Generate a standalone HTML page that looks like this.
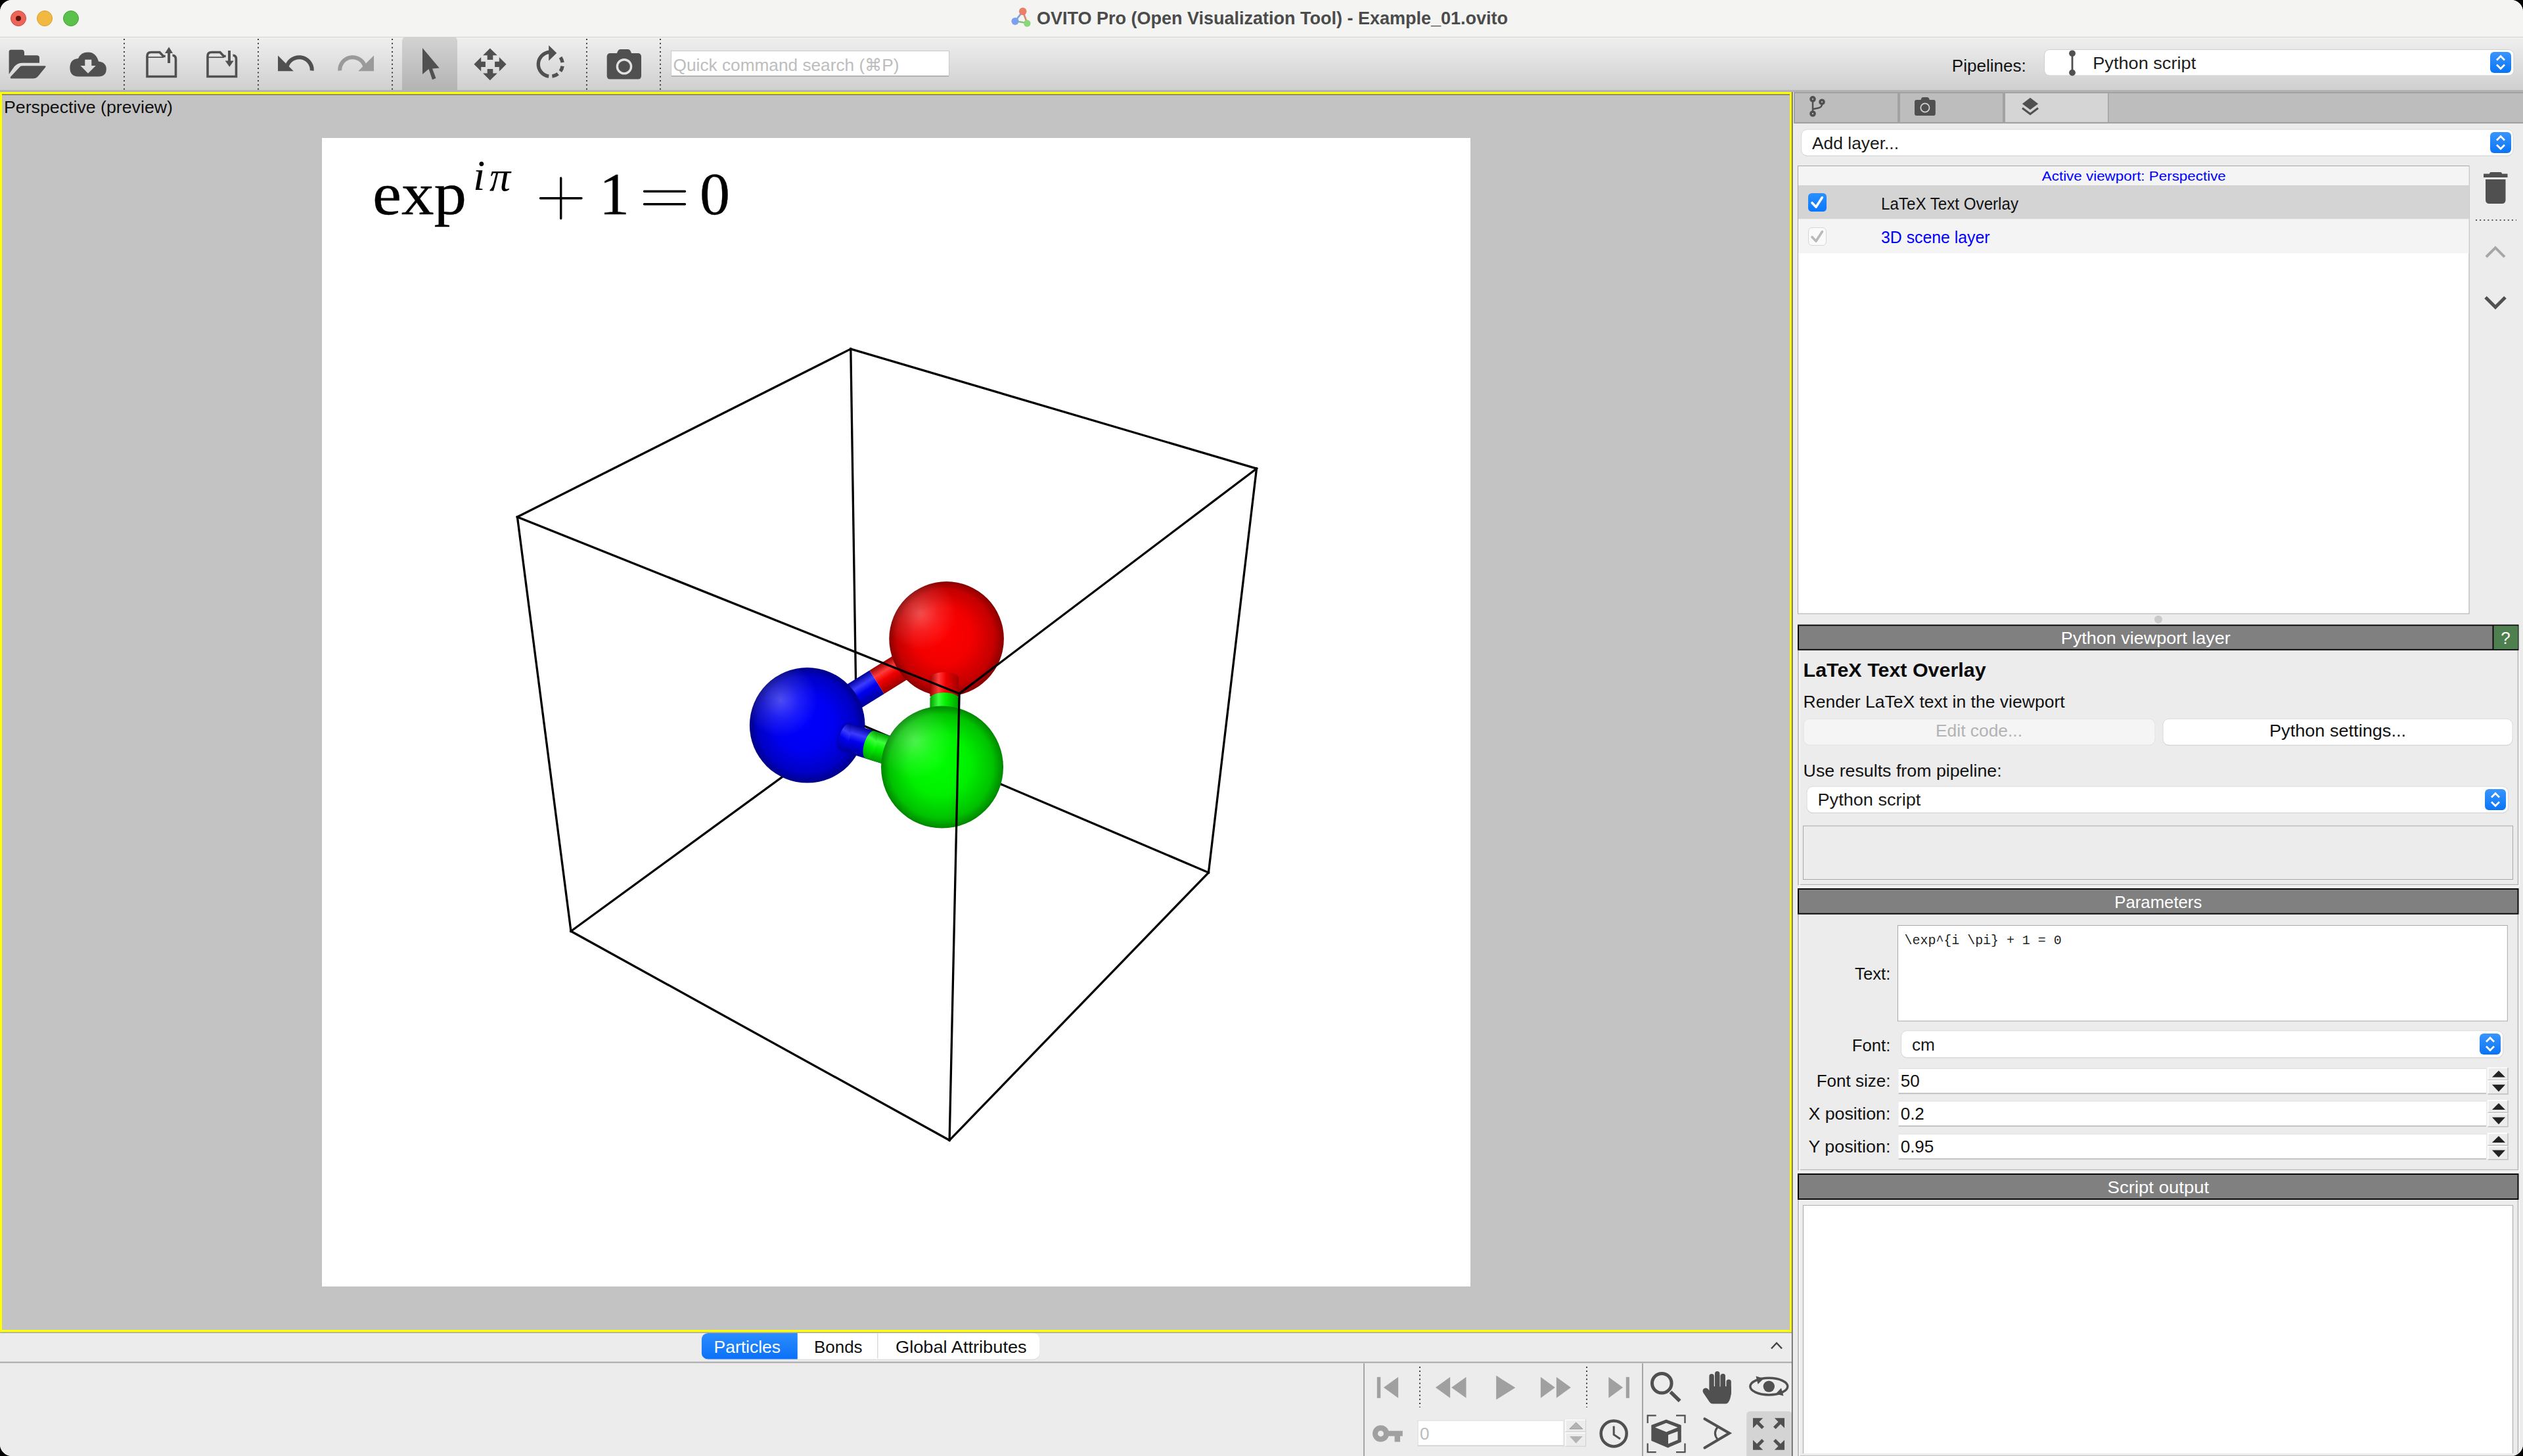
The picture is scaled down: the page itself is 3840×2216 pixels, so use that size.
<!DOCTYPE html>
<html><head><meta charset="utf-8">
<style>
*{margin:0;padding:0}
html,body{width:3840px;height:2216px;overflow:hidden;background:#000}
#win{position:absolute;left:0;top:0;width:3840px;height:2216px;border-radius:18px;overflow:hidden;background:#ececec}
svg{position:absolute;left:0;top:0;display:block}
</style></head><body>
<div id="win">
<svg width="3840" height="2216" viewBox="0 0 3840 2216">
<rect x="0" y="0" width="3840" height="57" fill="#f4f4f2" />
<rect x="0" y="56" width="3840" height="1" fill="#d2d2d2" />
<circle cx="28" cy="28" r="11.5" fill="#ec6559" stroke="#d24b3f" stroke-width="1"/>
<circle cx="68" cy="28" r="11.5" fill="#f2b940" stroke="#d99b2b" stroke-width="1"/>
<circle cx="108" cy="28" r="11.5" fill="#5ac24a" stroke="#40a332" stroke-width="1"/>
<circle cx="28" cy="28" r="4" fill="#60130b"/>
<line x1="1556.7" y1="17.3" x2="1545" y2="32.3" stroke="#7f9fd8" stroke-width="2.6"/>
<line x1="1556.7" y1="17.3" x2="1563.3" y2="35" stroke="#d88a70" stroke-width="2.6"/>
<line x1="1545" y1="32.3" x2="1563.3" y2="35" stroke="#86c07a" stroke-width="2.6"/>
<circle cx="1556.7" cy="17.3" r="5.8" fill="#e8806a"/>
<circle cx="1545" cy="32.3" r="5.6" fill="#7d9ff0"/>
<circle cx="1563.3" cy="35.5" r="5.2" fill="#8ad67a"/>
<text x="1578" y="37" font-family="Liberation Sans" font-size="27" fill="#4b4b4b" font-weight="bold" text-anchor="start" textLength="717" lengthAdjust="spacingAndGlyphs" >OVITO Pro (Open Visualization Tool) - Example_01.ovito</text>
<defs><linearGradient id="tbg" x1="0" y1="0" x2="0" y2="1"><stop offset="0" stop-color="#efefef"/><stop offset="1" stop-color="#cfcfcf"/></linearGradient><linearGradient id="selg" x1="0" y1="0" x2="0" y2="1"><stop offset="0" stop-color="#d3d3d3"/><stop offset="1" stop-color="#b3b3b3"/></linearGradient></defs>
<rect x="0" y="57" width="3840" height="81" fill="url(#tbg)" />
<rect x="0" y="137" width="3840" height="3" fill="#b2b2b2" />
<line x1="189" y1="59" x2="189" y2="138" stroke="#3c3c3c" stroke-width="2" stroke-dasharray="2 4.3"/>
<line x1="393" y1="59" x2="393" y2="138" stroke="#3c3c3c" stroke-width="2" stroke-dasharray="2 4.3"/>
<line x1="597" y1="59" x2="597" y2="138" stroke="#3c3c3c" stroke-width="2" stroke-dasharray="2 4.3"/>
<line x1="893" y1="59" x2="893" y2="138" stroke="#3c3c3c" stroke-width="2" stroke-dasharray="2 4.3"/>
<line x1="1005" y1="59" x2="1005" y2="138" stroke="#3c3c3c" stroke-width="2" stroke-dasharray="2 4.3"/>
<path d="M612 138 V63 Q612 56 619 56 H689 Q696 56 696 63 V138 Z" fill="url(#selg)"/>
<path d="M13.6 113 V79 Q13.6 75.7 17 75.7 H33 Q37 75.7 37 80 V84.3 H56 Q60 84.3 60 88 V95.7 H34 Q27 95.7 22 101 Z" fill="#505050"/>
<path d="M16 117 L29.5 102.5 Q31 100.3 34 100.3 H68.5 Q70.5 100.5 69 102.5 L58 116 Q55 119.6 50 119.6 H18 Q15 119.6 16 117 Z" fill="#505050"/>
<path d="M119 116.4 Q106.4 116.4 106.4 103 Q106.4 90 119 89 Q123 79.6 134 79.6 Q146 79.6 150 93.5 Q161.8 95 161.8 105 Q161.8 116.4 150 116.4 Z M129.3 90.7 V100 H122.5 L134 111.8 L145.7 100 H139.3 V90.7 Z" fill="#505050" fill-rule="evenodd"/>
<path d="M262.5 84.3 Q267.5 84.3 267.5 90 V116.5 H224 V85.5 Q224 79.5 230 79.5 H243 L248.5 85.5 H251.7" fill="none" stroke="#505050" stroke-width="3.6"/><path d="M224 87.2 H249" stroke="#505050" stroke-width="1.8"/>
<rect x="255.1" y="80" width="4" height="16" fill="#505050"/><path d="M251 81 L263.1 81 L257.1 71.4 Z" fill="#505050"/>
<path d="M354.5 84.3 Q359.5 84.3 359.5 90 V116.5 H316 V85.5 Q316 79.5 322 79.5 H335 L340.5 85.5 H343.7" fill="none" stroke="#505050" stroke-width="3.6"/><path d="M316 87.2 H341" stroke="#505050" stroke-width="1.8"/>
<rect x="347" y="77" width="4" height="16" fill="#505050"/><path d="M342.7 92.5 L355.7 92.5 L349.3 101.8 Z" fill="#505050"/>
<path d="M423 84.5 V108.3 H446.8 Z" fill="#505050"/>
<path d="M436 104 A19.5 19.5 0 0 1 474.8 107.5" fill="none" stroke="#505050" stroke-width="6"/>
<path d="M569 84.5 V108.3 H545.2 Z" fill="#9a9a9a"/>
<path d="M556 104 A19.5 19.5 0 0 0 517.2 107.5" fill="none" stroke="#9a9a9a" stroke-width="6"/>
<path d="M643 73 V113 L652.5 105 L658 121.3 L663.5 119 L658 104.5 L668.7 103.5 Z" fill="#505050"/>
<g fill="#505050"><path d="M745.8 73.4 L756.9 84.2 H750.3 V90.9 H741.7 V84.2 H735 Z"/><path d="M745.8 122.2 L756.9 111.5 H750.3 V105.1 H741.7 V111.5 H735 Z"/><path d="M721.4 97.8 L732.2 87 V93.7 H738.9 V102 H732.2 V108.6 Z"/><path d="M770.6 97.8 L759.8 87 V93.7 H753.1 V102 H759.8 V108.6 Z"/></g>
<path d="M837.80 79.30 A18.5 18.5 0 0 0 835.23 116.12 M853.01 87.27 A18.5 18.5 0 0 1 856.10 95.10 M856.09 100.60 A18.5 18.5 0 0 1 852.86 108.54 M849.19 112.38 A18.5 18.5 0 0 1 840.37 116.12" fill="none" stroke="#505050" stroke-width="5.4"/>
<path d="M835.2 69 L847.3 80.7 L835.2 92.4 Z" fill="#505050"/>
<rect x="923.7" y="81" width="52.3" height="39.6" rx="4.752" fill="#505050"/>
<path d="M938 83 L940.2 78.1 Q941.5 75.1 944.5 75.1 H955.5 Q958.5 75.1 959.8 78.1 L962 83 Z" fill="#505050"/>
<circle cx="950" cy="101.3" r="10.6" fill="none" stroke="#e2e2e2" stroke-width="3.4"/>
<rect x="1021.5" y="77.5" width="423" height="38.5" fill="#ffffff" stroke="#c9c9c9" stroke-width="1"/>
<rect x="1022" y="115" width="422" height="1.5" fill="#a8a8a8" />
<text x="1024.6" y="108" font-family="Liberation Sans" font-size="26" fill="#bdbdbd" font-weight="normal" text-anchor="start" textLength="344" lengthAdjust="spacingAndGlyphs" >Quick command search (⌘P)</text>
<text x="2970.8" y="109" font-family="Liberation Sans" font-size="26" fill="#111" font-weight="normal" text-anchor="start" textLength="113" lengthAdjust="spacingAndGlyphs" >Pipelines:</text>
<rect x="3111.5" y="75.5" width="714.5" height="39.5" rx="8" fill="#fff" stroke="#cfcfcf" stroke-width="1"/>
<circle cx="3154" cy="81.3" r="4.9" fill="#505050"/><circle cx="3154" cy="110.6" r="4.9" fill="#505050"/><rect x="3152.6" y="81" width="2.8" height="30" fill="#505050"/>
<text x="3185.2" y="104.8" font-family="Liberation Sans" font-size="26" fill="#1e1e1e" font-weight="normal" text-anchor="start" textLength="157" lengthAdjust="spacingAndGlyphs" >Python script</text>
<defs><linearGradient id="stg379079" x1="0" y1="0" x2="0" y2="1"><stop offset="0" stop-color="#3a95ff"/><stop offset="1" stop-color="#0a74f5"/></linearGradient></defs>
<rect x="3790" y="79" width="32" height="32" rx="6" fill="url(#stg379079)"/>
<path d="M3800.0 91.5 L3806.0 85.5 L3812.0 91.5 M3800.0 98.5 L3806.0 104.5 L3812.0 98.5" fill="none" stroke="#fff" stroke-width="2.8"/>
<rect x="0" y="140" width="2728" height="1888" fill="#c3c3c3" />
<rect x="0" y="140" width="2728" height="3.5" fill="#ffff00" />
<rect x="0" y="2024" width="2728" height="3.5" fill="#ffff00" />
<rect x="0" y="140" width="3" height="1888" fill="#ffff00" />
<rect x="2724" y="140" width="3.5" height="1888" fill="#ffff00" />
<rect x="3" y="143.5" width="2721" height="1" fill="#4a4a5a" />
<rect x="0" y="2027.5" width="2728" height="1.5" fill="#a8a8a8" />
<text x="6" y="172" font-family="Liberation Sans" font-size="26" fill="#111" font-weight="normal" text-anchor="start" textLength="257" lengthAdjust="spacingAndGlyphs" >Perspective (preview)</text>
<rect x="490" y="210" width="1748" height="1748" fill="#ffffff" />
<line x1="1294.8" y1="531.1" x2="1303.5" y2="1100" stroke="#000" stroke-width="3.3" stroke-linecap="square"/>
<line x1="869" y1="1417.3" x2="1303.5" y2="1100" stroke="#000" stroke-width="3.3" stroke-linecap="square"/>
<line x1="1839.4" y1="1328" x2="1303.5" y2="1100" stroke="#000" stroke-width="3.3" stroke-linecap="square"/>
<line x1="787.4" y1="786.8" x2="1294.8" y2="531.1" stroke="#000" stroke-width="3.3" stroke-linecap="square"/>
<line x1="1294.8" y1="531.1" x2="1912.5" y2="713.2" stroke="#000" stroke-width="3.3" stroke-linecap="square"/>
<line x1="787.4" y1="786.8" x2="869" y2="1417.3" stroke="#000" stroke-width="3.3" stroke-linecap="square"/>
<line x1="1912.5" y1="713.2" x2="1839.4" y2="1328" stroke="#000" stroke-width="3.3" stroke-linecap="square"/>
<line x1="869" y1="1417.3" x2="1445.1" y2="1735.4" stroke="#000" stroke-width="3.3" stroke-linecap="square"/>
<line x1="1839.4" y1="1328" x2="1445.1" y2="1735.4" stroke="#000" stroke-width="3.3" stroke-linecap="square"/>
<defs><radialGradient id="hl" cx="0.27" cy="0.28" r="0.32"><stop offset="0" stop-color="#fff" stop-opacity="0.3"/><stop offset="0.5" stop-color="#fff" stop-opacity="0.12"/><stop offset="1" stop-color="#fff" stop-opacity="0"/></radialGradient></defs>
<defs><radialGradient id="gR" cx="0.5" cy="0.5" r="0.5" fx="0.45" fy="0.45"><stop offset="0" stop-color="#ff0000"/><stop offset="0.5" stop-color="#f20000"/><stop offset="0.85" stop-color="#c40000"/><stop offset="1" stop-color="#880000"/></radialGradient></defs>
<defs><radialGradient id="gB" cx="0.5" cy="0.5" r="0.5" fx="0.45" fy="0.45"><stop offset="0" stop-color="#0000ff"/><stop offset="0.5" stop-color="#0000f2"/><stop offset="0.85" stop-color="#0000c4"/><stop offset="1" stop-color="#000088"/></radialGradient></defs>
<defs><radialGradient id="gG" cx="0.5" cy="0.5" r="0.5" fx="0.45" fy="0.45"><stop offset="0" stop-color="#00ff00"/><stop offset="0.5" stop-color="#00f000"/><stop offset="0.85" stop-color="#00c200"/><stop offset="1" stop-color="#008600"/></radialGradient></defs>
<defs><linearGradient id="bbr1" gradientUnits="userSpaceOnUse" x1="1217.6268472290717" y1="1085.9566458390896" x2="1239.7731527709284" y2="1121.6433541609103"><stop offset="0" stop-color="#00009a"/><stop offset="0.3" stop-color="#3c3cff"/><stop offset="0.55" stop-color="#0000f0"/><stop offset="1" stop-color="#00009a"/></linearGradient></defs>
<defs><linearGradient id="bbr2" gradientUnits="userSpaceOnUse" x1="1217.6268472290717" y1="1085.9566458390896" x2="1239.7731527709284" y2="1121.6433541609103"><stop offset="0" stop-color="#9a0000"/><stop offset="0.3" stop-color="#ff3c3c"/><stop offset="0.55" stop-color="#f00000"/><stop offset="1" stop-color="#9a0000"/></linearGradient></defs>
<path d="M1217.6268472290717 1085.9566458390896 L1323.5768472290717 1020.2066458390894 L1345.7231527709284 1055.8933541609103 L1239.7731527709284 1121.6433541609103 Z" fill="url(#bbr1)"/>
<path d="M1323.5768472290717 1020.2066458390894 L1429.5268472290716 954.4566458390894 L1451.6731527709283 990.1433541609105 L1345.7231527709284 1055.8933541609103 Z" fill="url(#bbr2)"/>
<circle cx="1440.6" cy="972.3" r="87.3" fill="url(#gR)"/><circle cx="1440.6" cy="972.3" r="87.3" fill="url(#hl)"/>
<circle cx="1228.7" cy="1103.8" r="87.8" fill="url(#gB)"/><circle cx="1228.7" cy="1103.8" r="87.8" fill="url(#hl)"/>
<defs><linearGradient id="vbr" x1="1415.4" y1="0" x2="1459.2" y2="0" gradientUnits="userSpaceOnUse"><stop offset="0" stop-color="#a00000"/><stop offset="0.3" stop-color="#ff3c3c"/><stop offset="0.55" stop-color="#f00000"/><stop offset="1" stop-color="#a00000"/></linearGradient><linearGradient id="vbg" x1="1415.4" y1="0" x2="1459.2" y2="0" gradientUnits="userSpaceOnUse"><stop offset="0" stop-color="#00a000"/><stop offset="0.3" stop-color="#3cff3c"/><stop offset="0.55" stop-color="#00f000"/><stop offset="1" stop-color="#00a000"/></linearGradient></defs>
<path d="M1415.4 1060 V1032 A21.9 9 0 0 1 1459.2 1032 V1060 Z" fill="url(#vbr)"/>
<path d="M1415.4 1085 V1063 A21.9 9 0 0 1 1459.2 1063 V1085 Z" fill="url(#vbg)"/>
<defs><linearGradient id="bbg1" gradientUnits="userSpaceOnUse" x1="1290.6159611713076" y1="1100.0034552243992" x2="1277.5583031290796" y2="1142.0212796142014"><stop offset="0" stop-color="#00009a"/><stop offset="0.3" stop-color="#3c3cff"/><stop offset="0.55" stop-color="#0000f0"/><stop offset="1" stop-color="#00009a"/></linearGradient></defs>
<defs><linearGradient id="bbg0" gradientUnits="userSpaceOnUse" x1="1290.6159611713076" y1="1100.0034552243992" x2="1277.5583031290796" y2="1142.0212796142014"><stop offset="0" stop-color="#00009a"/><stop offset="0.3" stop-color="#3c3cff"/><stop offset="0.55" stop-color="#0000f0"/><stop offset="1" stop-color="#00009a"/></linearGradient></defs>
<path d="M1290.6159611713076 1100.0034552243992 L1365.5723950962108 1123.2972715147491 L1352.5147370539828 1165.3150959045513 L1277.5583031290796 1142.0212796142014 Z" fill="url(#bbg1)"/>
<path d="M1365.5723950962108 1123.2972715147491 L1440.528829021114 1146.5910878050988 L1427.471170978886 1188.608912194901 L1352.5147370539828 1165.3150959045513 Z" fill="url(#bbg0)"/>
<ellipse cx="1284.0871321501936" cy="1121.0123674193003" rx="9" ry="22" transform="rotate(17.26340205152041 1284.0871321501936 1121.0123674193003)" fill="#0000c0"/>
<ellipse cx="1285.5871321501936" cy="1121.5123674193003" rx="8" ry="20.5" transform="rotate(17.26340205152041 1284.0871321501936 1121.0123674193003)" fill="url(#bbg1)"/>
<defs><linearGradient id="bbg2" gradientUnits="userSpaceOnUse" x1="1330.7238844524823" y1="1112.4675833556166" x2="1317.6662264102542" y2="1154.4854077454188"><stop offset="0" stop-color="#009a00"/><stop offset="0.3" stop-color="#3cff3c"/><stop offset="0.55" stop-color="#00f000"/><stop offset="1" stop-color="#009a00"/></linearGradient></defs>
<defs><linearGradient id="bbg3" gradientUnits="userSpaceOnUse" x1="1330.7238844524823" y1="1112.4675833556166" x2="1317.6662264102542" y2="1154.4854077454188"><stop offset="0" stop-color="#009a00"/><stop offset="0.3" stop-color="#3cff3c"/><stop offset="0.55" stop-color="#00f000"/><stop offset="1" stop-color="#009a00"/></linearGradient></defs>
<path d="M1330.7238844524823 1112.4675833556166 L1385.626356736798 1129.5293355803576 L1372.56869869457 1171.5471599701598 L1317.6662264102542 1154.4854077454188 Z" fill="url(#bbg2)"/>
<path d="M1385.626356736798 1129.5293355803576 L1440.528829021114 1146.5910878050988 L1427.471170978886 1188.608912194901 L1372.56869869457 1171.5471599701598 Z" fill="url(#bbg3)"/>
<ellipse cx="1324.1950554313682" cy="1133.4764955505177" rx="9" ry="22" transform="rotate(17.26340205152041 1324.1950554313682 1133.4764955505177)" fill="url(#bbg2)"/>
<circle cx="1434" cy="1167.6" r="93" fill="url(#gG)"/><circle cx="1434" cy="1167.6" r="93" fill="url(#hl)"/>
<line x1="787.4" y1="786.8" x2="1460.1" y2="1055.6" stroke="#000" stroke-width="3.3" stroke-linecap="square"/>
<line x1="1912.5" y1="713.2" x2="1460.1" y2="1055.6" stroke="#000" stroke-width="3.3" stroke-linecap="square"/>
<line x1="1460.1" y1="1055.6" x2="1445.1" y2="1735.4" stroke="#000" stroke-width="3.3" stroke-linecap="square"/>
<text x="567" y="326.4" font-family="Liberation Serif" font-size="92" fill="#000" stroke="#000" stroke-width="0.35" textLength="143" lengthAdjust="spacingAndGlyphs">exp</text>
<text x="720" y="289" font-family="Liberation Serif" font-size="66" font-style="italic" fill="#000">i</text>
<text x="745" y="290" font-family="Liberation Serif" font-size="64" font-style="italic" fill="#000">π</text>
<path d="M822.5 301.7 H885 M853.7 271 V332.5" stroke="#000" stroke-width="3.4" stroke-linecap="round"/>
<text x="912" y="326.4" font-family="Liberation Serif" font-size="92" fill="#000" stroke="#000" stroke-width="0.35">1</text>
<path d="M980.5 291.3 H1042.5 M980.5 310.7 H1042.5" stroke="#000" stroke-width="3.4" stroke-linecap="round"/>
<text x="1065" y="326.4" font-family="Liberation Serif" font-size="92" fill="#000" stroke="#000" stroke-width="0.35">0</text>
<rect x="0" y="2029" width="2728" height="187" fill="#ececec" />
<rect x="0" y="2072.5" width="2728" height="2" fill="#a6a6a6" />
<defs><linearGradient id="segb" x1="0" y1="0" x2="0" y2="1"><stop offset="0" stop-color="#2b8dff"/><stop offset="1" stop-color="#0a70f8"/></linearGradient><clipPath id="segclip"><rect x="1067.7" y="2028.9" width="514.6" height="39.9" rx="10"/></clipPath></defs>
<rect x="1067.7" y="2029.9" width="514.6" height="39.9" rx="10" fill="#d0d0d0" opacity="0.7"/>
<rect x="1067.7" y="2028.9" width="514.6" height="39.9" rx="10" fill="#ffffff"/>
<rect x="1067.7" y="2028.9" width="146.1" height="39.9" fill="url(#segb)" clip-path="url(#segclip)"/>
<rect x="1335" y="2029.5" width="1.5" height="38" fill="#dcdcdc" />
<text x="1086.6" y="2058.8" font-family="Liberation Sans" font-size="26" fill="#ffffff" font-weight="normal" text-anchor="start" textLength="101.4" lengthAdjust="spacingAndGlyphs" >Particles</text>
<text x="1239" y="2058.8" font-family="Liberation Sans" font-size="26" fill="#111" font-weight="normal" text-anchor="start" textLength="73.6" lengthAdjust="spacingAndGlyphs" >Bonds</text>
<text x="1363" y="2058.8" font-family="Liberation Sans" font-size="26" fill="#111" font-weight="normal" text-anchor="start" textLength="199.7" lengthAdjust="spacingAndGlyphs" >Global Attributes</text>
<path d="M2696 2052.5 L2704 2044 L2712 2052.5" fill="none" stroke="#444" stroke-width="2.5"/>
<rect x="2075" y="2075" width="2" height="141" fill="#a6a6a6" />
<rect x="2499" y="2075" width="2" height="141" fill="#a6a6a6" />
<g fill="#a0a0a0"><rect x="2095.8" y="2095.8" width="5.4" height="32"/><path d="M2105.9 2111.8 L2128.1 2095.8 V2127.8 Z"/><path d="M2184.9 2111.8 L2207.1 2095.8 V2127.8 Z"/><path d="M2209.1 2111.8 L2231.5 2095.8 V2127.8 Z"/><path d="M2277.2 2093.6 L2306.3 2111.9 L2277.2 2130.3 Z"/><path d="M2344.9 2095.8 L2366.8 2111.8 L2344.9 2127.8 Z"/><path d="M2368.8 2095.8 L2390.8 2111.8 L2368.8 2127.8 Z"/><path d="M2448.3 2095.8 L2470.1 2111.8 L2448.3 2127.8 Z"/><rect x="2474.8" y="2095.8" width="5.1" height="32"/></g>
<line x1="2161" y1="2080" x2="2161" y2="2142" stroke="#3c3c3c" stroke-width="2" stroke-dasharray="2 4.1"/>
<line x1="2415" y1="2080" x2="2415" y2="2142" stroke="#3c3c3c" stroke-width="2" stroke-dasharray="2 4.1"/>
<path d="M2101.5 2169.3 A12.6 12.6 0 1 0 2113.6 2185.7 H2122.6 V2194.5 H2131 V2185.7 H2134.8 V2177.7 H2113.6 A12.6 12.6 0 0 0 2101.5 2169.3 Z M2101.5 2177.4 A4.5 4.5 0 1 1 2101.5 2186.4 A4.5 4.5 0 1 1 2101.5 2177.4 Z" fill="#a0a0a0" fill-rule="evenodd"/>
<rect x="2158" y="2162" width="222" height="38.7" fill="#fff" stroke="#e2e2e2" stroke-width="1.5"/>
<rect x="2158" y="2199.5" width="222" height="1.5" fill="#d0d0d0" />
<text x="2160.9" y="2191" font-family="Liberation Sans" font-size="26" fill="#bcbcbc" font-weight="normal" text-anchor="start" >0</text>
<rect x="2382.2" y="2160.4" width="31.3" height="18.5" fill="#ececec" stroke="#d0d0d0" stroke-width="1"/>
<path d="M2382.7 2178.4 V2160.9 H2413" fill="none" stroke="#fff" stroke-width="1.5"/>
<rect x="2382.2" y="2180.2" width="31.3" height="21.0" fill="#ececec" stroke="#d0d0d0" stroke-width="1"/>
<path d="M2382.7 2200.7 V2180.7 H2413" fill="none" stroke="#fff" stroke-width="1.5"/>
<path d="M2388.9 2174.8 L2398.7 2165 L2408.8 2174.8 Z" fill="#b4b4b4" stroke="#888" stroke-width="0.8"/>
<path d="M2388.9 2186 L2398.7 2196.7 L2408.8 2186 Z" fill="#b4b4b4"/>
<circle cx="2456.2" cy="2181.9" r="19.5" fill="none" stroke="#505050" stroke-width="4.5"/>
<path d="M2456.2 2170.5 V2183.5 L2466 2190" fill="none" stroke="#505050" stroke-width="3"/>
<circle cx="2529.3" cy="2105.3" r="14.8" fill="none" stroke="#505050" stroke-width="5"/>
<line x1="2542.5" y1="2118.5" x2="2556.7" y2="2132.3" stroke="#505050" stroke-width="5.5"/>
<g fill="#505050"><rect x="2601.4" y="2091" width="7.4" height="30" rx="3.7"/><rect x="2610" y="2087" width="7.4" height="30" rx="3.7"/><rect x="2618.6" y="2090.8" width="7.4" height="30" rx="3.7"/><rect x="2627.4" y="2099.5" width="7.4" height="25" rx="3.7"/><path d="M2602 2110 H2634.8 V2120 Q2634 2130 2630 2135 Q2628 2136.6 2626 2136.6 H2606.5 Q2604 2136.6 2602 2134 L2592.5 2120 Q2590 2115 2594 2113 Q2597.5 2111.5 2600.5 2115 L2602 2117 Z"/></g>
<rect x="2617.5" y="2093" width="1" height="18" fill="#8a8a8a"/>
<ellipse cx="2692.3" cy="2110.1" rx="28.5" ry="12.8" fill="none" stroke="#505050" stroke-width="3.5"/>
<circle cx="2692.3" cy="2110.1" r="8.7" fill="#505050"/>
<path d="M2672.5 2094.5 L2684.5 2098 L2675.5 2106.8 Z" fill="#505050"/><path d="M2714.5 2124.5 L2702.5 2121.5 L2711 2112.5 Z" fill="#505050"/>
<path d="M2507.7 2166 V2154.4 H2520.7 M2551 2154.4 H2564.5 V2166 M2507.7 2196.7 V2210.1 H2520.7 M2551 2210.1 H2564.5 V2196.7" fill="none" stroke="#505050" stroke-width="2.3"/>
<path d="M2536 2160.6 L2558.8 2169 V2194.8 L2538.5 2203.4 L2513.3 2192.8 V2169 Z M2519 2172.5 L2536.3 2179.4 L2553.5 2172.5 L2536 2165.8 Z M2539 2184 V2197.5 L2553.5 2191.5 V2178.5 Z" fill="#505050" fill-rule="evenodd"/>
<path d="M2594.5 2159.5 L2632 2181.3 L2594.5 2203.5" fill="none" stroke="#505050" stroke-width="4.2" stroke-linecap="round" stroke-linejoin="miter"/>
<path d="M2614.2 2172 Q2606.5 2181.5 2614.2 2190.6" fill="none" stroke="#505050" stroke-width="3"/>
<path d="M2658.2 2216 V2154 Q2658.2 2148 2664.2 2148 H2722 Q2728 2148 2728 2154 V2216 Z" fill="#d4d4d4"/>
<g fill="#505050"><path d="M2668 2158.2 H2683.2 L2677.5 2164 L2685 2171.5 L2681.5 2175 L2674 2167.5 L2668 2173.5 Z"/><path d="M2716 2158.2 H2700.8 L2706.5 2164 L2699 2171.5 L2702.5 2175 L2710 2167.5 L2716 2173.5 Z"/><path d="M2668 2206.8 H2683.2 L2677.5 2201 L2685 2193.5 L2681.5 2190 L2674 2197.5 L2668 2191.5 Z"/><path d="M2716 2206.8 H2700.8 L2706.5 2201 L2699 2193.5 L2702.5 2190 L2710 2197.5 L2716 2191.5 Z"/></g>
<rect x="2728.5" y="140" width="1111.5" height="2076" fill="#ececec" />
<rect x="2727" y="140" width="1.5" height="2076" fill="#56565f" />
<rect x="2730" y="140" width="1110" height="48" fill="#a2a2a2" />
<rect x="2732" y="142" width="156" height="43.8" fill="#bdbdbd" />
<rect x="2892" y="142" width="156" height="43.8" fill="#bdbdbd" />
<rect x="3052" y="142" width="156" height="43.8" fill="#d5d5d5" />
<rect x="3209.5" y="142" width="630.5" height="43.8" fill="#bdbdbd" />
<g fill="none" stroke="#505050"><circle cx="2759" cy="150.8" r="2.9" stroke-width="3.8"/><circle cx="2773" cy="155.2" r="2.9" stroke-width="3.8"/><circle cx="2759" cy="173" r="2.9" stroke-width="3.8"/><path d="M2759 154.5 V169.5" stroke-width="2.5"/><path d="M2773 158.5 Q2773 163.5 2767 164.5 L2759.5 166" stroke-width="2.5"/></g>
<g fill="#c0c0c0"><circle cx="2759" cy="150.8" r="0.9"/><circle cx="2773" cy="155.2" r="0.9"/><circle cx="2759" cy="173" r="0.9"/></g>
<rect x="2914" y="151.9" width="31.8" height="24.1" rx="2.892" fill="#505050"/>
<path d="M2922.9 153.9 L2924.2200000000003 149.8 Q2925.0 148 2926.8 148 H2933.4 Q2935.2000000000003 148 2935.98 149.8 L2937.3 153.9 Z" fill="#505050"/>
<circle cx="2929.9" cy="164" r="6.6" fill="none" stroke="#d6d6d6" stroke-width="1.7"/>
<path d="M3090 148.8 L3102.1 157.9 L3090 167 L3077.9 157.9 Z" fill="#505050"/>
<path d="M3078 164.5 L3090 173.5 L3102 164.5" fill="none" stroke="#505050" stroke-width="3"/>
<rect x="2741.6" y="198" width="1083.4" height="40" rx="9" fill="#d6d6d6"/>
<rect x="2741.6" y="197" width="1083.4" height="40" rx="9" fill="#ffffff" stroke="#dadada" stroke-width="1"/>
<text x="2758" y="227" font-family="Liberation Sans" font-size="26" fill="#1a1a1a" font-weight="normal" text-anchor="start" textLength="132" lengthAdjust="spacingAndGlyphs" >Add layer...</text>
<defs><linearGradient id="stg3790201" x1="0" y1="0" x2="0" y2="1"><stop offset="0" stop-color="#3a95ff"/><stop offset="1" stop-color="#0a74f5"/></linearGradient></defs>
<rect x="3790" y="201" width="32" height="32" rx="6" fill="url(#stg3790201)"/>
<path d="M3800.0 213.5 L3806.0 207.5 L3812.0 213.5 M3800.0 220.5 L3806.0 226.5 L3812.0 220.5" fill="none" stroke="#fff" stroke-width="2.8"/>
<rect x="2736.5" y="252.5" width="1021.5" height="681.5" fill="#ffffff" stroke="#a8a8a8" stroke-width="1"/>
<rect x="2737" y="253" width="1020.5" height="29" fill="#f4f4f4" />
<rect x="2737" y="282" width="1020.5" height="51.5" fill="#d4d4d4" />
<rect x="2737" y="333.5" width="1020.5" height="52" fill="#f4f4f4" />
<text x="3107.8" y="274.6" font-family="Liberation Sans" font-size="20" fill="#0000ff" font-weight="normal" text-anchor="start" textLength="280" lengthAdjust="spacingAndGlyphs" >Active viewport: Perspective</text>
<text x="2863" y="318.8" font-family="Liberation Sans" font-size="26" fill="#111" font-weight="normal" text-anchor="start" textLength="209" lengthAdjust="spacingAndGlyphs" >LaTeX Text Overlay</text>
<text x="2863" y="369.8" font-family="Liberation Sans" font-size="26" fill="#0000ff" font-weight="normal" text-anchor="start" textLength="165.6" lengthAdjust="spacingAndGlyphs" >3D scene layer</text>
<defs><linearGradient id="cbg" x1="0" y1="0" x2="0" y2="1"><stop offset="0" stop-color="#2c8fff"/><stop offset="1" stop-color="#0877ff"/></linearGradient></defs>
<rect x="2752" y="294" width="28" height="28" rx="5.5" fill="url(#cbg)"/>
<path d="M2758 308.7 L2764 315.1 L2773.4 300.6" fill="none" stroke="#fff" stroke-width="3.6" stroke-linecap="round" stroke-linejoin="round"/>
<rect x="2752.5" y="346.5" width="27" height="27" rx="5.5" fill="#fafafa" stroke="#d6d6d6" stroke-width="1"/>
<path d="M2758 360.7 L2764 367.1 L2773.4 352.6" fill="none" stroke="#b9b9b9" stroke-width="3.6" stroke-linecap="round" stroke-linejoin="round"/>
<path d="M3780 264.5 H3816.5 V270 H3780 Z M3791 262 H3806 Q3808 262 3808 264.5 H3789 Q3789 262 3791 262 Z M3783 273 H3813.5 V304 Q3813.5 310 3807.5 310 H3789 Q3783 310 3783 304 Z" fill="#505050"/>
<line x1="3768" y1="335" x2="3830" y2="335" stroke="#555" stroke-width="2" stroke-dasharray="2 4.1"/>
<path d="M3784 391 L3798 377 L3812 391" fill="none" stroke="#a6a6a6" stroke-width="4"/>
<path d="M3783 452.5 L3798 467.5 L3813 452.5" fill="none" stroke="#505050" stroke-width="5"/>
<circle cx="3285" cy="942.8" r="6" fill="#cacaca"/>
<path d="M2737 990 V1346.5 H3832.5 V990" fill="none" stroke="#b8b8b8" stroke-width="1.7"/>
<path d="M2738.9 990 V1348.3 H3834.4 V990" fill="none" stroke="#fafafa" stroke-width="1.6"/>
<rect x="2737" y="951.6" width="1095.5" height="37.19999999999993" fill="#808080" stroke="#0a0a0a" stroke-width="2"/>
<text x="3136.8" y="980.4" font-family="Liberation Sans" font-size="26" fill="#ffffff" font-weight="normal" text-anchor="start" textLength="258" lengthAdjust="spacingAndGlyphs" >Python viewport layer</text>
<rect x="3795.5" y="952.6" width="37" height="35.19999999999993" fill="#4e7f4e"/>
<rect x="3793.5" y="951.6" width="2" height="37.19999999999993" fill="#0a0a0a" />
<text x="3813.5" y="980.4" font-family="Liberation Sans" font-size="26" fill="#ffffff" font-weight="normal" text-anchor="middle" >?</text>
<text x="2744.6" y="1030" font-family="Liberation Sans" font-size="30" fill="#0a0a0a" font-weight="bold" text-anchor="start" textLength="278" lengthAdjust="spacingAndGlyphs" >LaTeX Text Overlay</text>
<text x="2744.6" y="1077" font-family="Liberation Sans" font-size="26" fill="#111" font-weight="normal" text-anchor="start" textLength="398" lengthAdjust="spacingAndGlyphs" >Render LaTeX text in the viewport</text>
<rect x="2745" y="1094" width="535" height="40" rx="9" fill="#f5f5f5" stroke="#e2e2e2" stroke-width="1"/>
<text x="2946" y="1121.4" font-family="Liberation Sans" font-size="26" fill="#b3b3b3" font-weight="normal" text-anchor="start" textLength="132" lengthAdjust="spacingAndGlyphs" >Edit code...</text>
<rect x="3292" y="1095" width="532" height="40" rx="9" fill="#d4d4d4"/>
<rect x="3292" y="1094" width="532" height="40" rx="9" fill="#ffffff" stroke="#dadada" stroke-width="1"/>
<text x="3454" y="1121.3" font-family="Liberation Sans" font-size="26" fill="#111" font-weight="normal" text-anchor="start" textLength="208" lengthAdjust="spacingAndGlyphs" >Python settings...</text>
<text x="2744.6" y="1182" font-family="Liberation Sans" font-size="26" fill="#111" font-weight="normal" text-anchor="start" textLength="302" lengthAdjust="spacingAndGlyphs" >Use results from pipeline:</text>
<rect x="2750" y="1198" width="1067.6" height="40" rx="9" fill="#d6d6d6"/>
<rect x="2750" y="1197" width="1067.6" height="40" rx="9" fill="#ffffff" stroke="#dadada" stroke-width="1"/>
<text x="2766.5" y="1226" font-family="Liberation Sans" font-size="26" fill="#1a1a1a" font-weight="normal" text-anchor="start" textLength="156.8" lengthAdjust="spacingAndGlyphs" >Python script</text>
<defs><linearGradient id="stg37821201" x1="0" y1="0" x2="0" y2="1"><stop offset="0" stop-color="#3a95ff"/><stop offset="1" stop-color="#0a74f5"/></linearGradient></defs>
<rect x="3782" y="1201" width="32" height="32" rx="6" fill="url(#stg37821201)"/>
<path d="M3792.0 1213.5 L3798.0 1207.5 L3804.0 1213.5 M3792.0 1220.5 L3798.0 1226.5 L3804.0 1220.5" fill="none" stroke="#fff" stroke-width="2.8"/>
<rect x="2744.5" y="1257" width="1080" height="81.5" fill="none" stroke="#a8a8a8" stroke-width="1"/>
<path d="M2737 1391.7 V1780.5 H3832.5 V1391.7" fill="none" stroke="#b8b8b8" stroke-width="1.7"/>
<path d="M2738.9 1391.7 V1782.3 H3834.4 V1391.7" fill="none" stroke="#fafafa" stroke-width="1.6"/>
<rect x="2737" y="1353" width="1095.5" height="37.700000000000045" fill="#808080" stroke="#0a0a0a" stroke-width="2"/>
<text x="3218.3" y="1381.9" font-family="Liberation Sans" font-size="26" fill="#ffffff" font-weight="normal" text-anchor="start" textLength="133" lengthAdjust="spacingAndGlyphs" >Parameters</text>
<rect x="2888.5" y="1408.5" width="927.8" height="145.5" fill="#ffffff" stroke="#a8a8a8" stroke-width="1"/>
<text x="2898.6" y="1437" font-family="Liberation Mono" font-size="20" fill="#222" font-weight="normal" text-anchor="start" textLength="239" lengthAdjust="spacingAndGlyphs" >\exp^{i \pi} + 1 = 0</text>
<text x="2877.4" y="1491" font-family="Liberation Sans" font-size="26" fill="#111" font-weight="normal" text-anchor="end" textLength="54.4" lengthAdjust="spacingAndGlyphs" >Text:</text>
<text x="2877.4" y="1600" font-family="Liberation Sans" font-size="26" fill="#111" font-weight="normal" text-anchor="end" textLength="58.6" lengthAdjust="spacingAndGlyphs" >Font:</text>
<rect x="2893.5" y="1569.7" width="916.2" height="40.9" rx="9" fill="#d6d6d6"/>
<rect x="2893.5" y="1568.7" width="916.2" height="40.9" rx="9" fill="#ffffff" stroke="#dadada" stroke-width="1"/>
<text x="2910" y="1598.5" font-family="Liberation Sans" font-size="26" fill="#1a1a1a" font-weight="normal" text-anchor="start" textLength="35" lengthAdjust="spacingAndGlyphs" >cm</text>
<defs><linearGradient id="stg37741573" x1="0" y1="0" x2="0" y2="1"><stop offset="0" stop-color="#3a95ff"/><stop offset="1" stop-color="#0a74f5"/></linearGradient></defs>
<rect x="3774" y="1573" width="32" height="32" rx="6" fill="url(#stg37741573)"/>
<path d="M3784.0 1585.5 L3790.0 1579.5 L3796.0 1585.5 M3784.0 1592.5 L3790.0 1598.5 L3796.0 1592.5" fill="none" stroke="#fff" stroke-width="2.8"/>
<text x="2877.4" y="1654" font-family="Liberation Sans" font-size="26" fill="#111" font-weight="normal" text-anchor="end" textLength="112.7" lengthAdjust="spacingAndGlyphs" >Font size:</text>
<rect x="2889.6" y="1625.8" width="894.4" height="39" fill="#ffffff"/>
<rect x="2889.6" y="1625.8" width="894.4" height="1" fill="#d8d8d8" />
<rect x="2889.6" y="1663.3" width="894.4" height="1.8" fill="#bcbcbc" />
<text x="2892.7" y="1654" font-family="Liberation Sans" font-size="26" fill="#111" font-weight="normal" text-anchor="start" >50</text>
<rect x="3786" y="1624.6" width="31.6" height="19.799999999999955" fill="#ececec"/>
<path d="M3786.7 1643.3999999999999 V1625.3 H3816" fill="none" stroke="#ffffff" stroke-width="1.6"/>
<path d="M3786.7 1643.6999999999998 H3817 V1625.3" fill="none" stroke="#c2c2c2" stroke-width="1.6"/>
<path d="M3792.9 1639.3999999999999 H3813 L3803 1629.3999999999999 Z" fill="#222"/>
<rect x="3786" y="1644.3999999999999" width="31.6" height="21.40000000000009" fill="#ececec"/>
<path d="M3786.7 1664.8 V1645.1 H3816" fill="none" stroke="#ffffff" stroke-width="1.6"/>
<path d="M3786.7 1665.1 H3817 V1645.1" fill="none" stroke="#c2c2c2" stroke-width="1.6"/>
<path d="M3792.9 1650.8 H3813 L3803 1661.6 Z" fill="#222"/>
<text x="2877.4" y="1703.8" font-family="Liberation Sans" font-size="26" fill="#111" font-weight="normal" text-anchor="end" textLength="125" lengthAdjust="spacingAndGlyphs" >X position:</text>
<rect x="2889.6" y="1675.4" width="894.4" height="39" fill="#ffffff"/>
<rect x="2889.6" y="1675.4" width="894.4" height="1" fill="#d8d8d8" />
<rect x="2889.6" y="1712.9" width="894.4" height="1.8" fill="#bcbcbc" />
<text x="2892.7" y="1703.8" font-family="Liberation Sans" font-size="26" fill="#111" font-weight="normal" text-anchor="start" >0.2</text>
<rect x="3786" y="1674.2" width="31.6" height="19.799999999999955" fill="#ececec"/>
<path d="M3786.7 1693.0 V1674.9 H3816" fill="none" stroke="#ffffff" stroke-width="1.6"/>
<path d="M3786.7 1693.3 H3817 V1674.9" fill="none" stroke="#c2c2c2" stroke-width="1.6"/>
<path d="M3792.9 1689.0 H3813 L3803 1679.0 Z" fill="#222"/>
<rect x="3786" y="1694.0" width="31.6" height="21.40000000000009" fill="#ececec"/>
<path d="M3786.7 1714.4 V1694.7 H3816" fill="none" stroke="#ffffff" stroke-width="1.6"/>
<path d="M3786.7 1714.7 H3817 V1694.7" fill="none" stroke="#c2c2c2" stroke-width="1.6"/>
<path d="M3792.9 1700.4 H3813 L3803 1711.2 Z" fill="#222"/>
<text x="2877.4" y="1753.8" font-family="Liberation Sans" font-size="26" fill="#111" font-weight="normal" text-anchor="end" textLength="125" lengthAdjust="spacingAndGlyphs" >Y position:</text>
<rect x="2889.6" y="1725.4" width="894.4" height="39" fill="#ffffff"/>
<rect x="2889.6" y="1725.4" width="894.4" height="1" fill="#d8d8d8" />
<rect x="2889.6" y="1762.9" width="894.4" height="1.8" fill="#bcbcbc" />
<text x="2892.7" y="1753.8" font-family="Liberation Sans" font-size="26" fill="#111" font-weight="normal" text-anchor="start" >0.95</text>
<rect x="3786" y="1724.2" width="31.6" height="19.799999999999955" fill="#ececec"/>
<path d="M3786.7 1743.0 V1724.9 H3816" fill="none" stroke="#ffffff" stroke-width="1.6"/>
<path d="M3786.7 1743.3 H3817 V1724.9" fill="none" stroke="#c2c2c2" stroke-width="1.6"/>
<path d="M3792.9 1739.0 H3813 L3803 1729.0 Z" fill="#222"/>
<rect x="3786" y="1744.0" width="31.6" height="21.40000000000009" fill="#ececec"/>
<path d="M3786.7 1764.4 V1744.7 H3816" fill="none" stroke="#ffffff" stroke-width="1.6"/>
<path d="M3786.7 1764.7 H3817 V1744.7" fill="none" stroke="#c2c2c2" stroke-width="1.6"/>
<path d="M3792.9 1750.4 H3813 L3803 1761.2 Z" fill="#222"/>
<rect x="2737" y="1787" width="1095.5" height="38" fill="#808080" stroke="#0a0a0a" stroke-width="2"/>
<text x="3207.6" y="1815.7" font-family="Liberation Sans" font-size="26" fill="#ffffff" font-weight="normal" text-anchor="start" textLength="154.6" lengthAdjust="spacingAndGlyphs" >Script output</text>
<path d="M2737 1826 V2216 H3832.5 V1826" fill="none" stroke="#b8b8b8" stroke-width="1.7"/>
<path d="M2738.9 1826 V2217.8 H3834.4 V1826" fill="none" stroke="#fafafa" stroke-width="1.6"/>
<rect x="2744" y="1834" width="1081" height="378" fill="#ffffff"/><path d="M2744.5 2212 V1834.5 H3824.5 V2212" fill="none" stroke="#b0b0b0" stroke-width="1.2"/>
</svg>
</div>
</body></html>
